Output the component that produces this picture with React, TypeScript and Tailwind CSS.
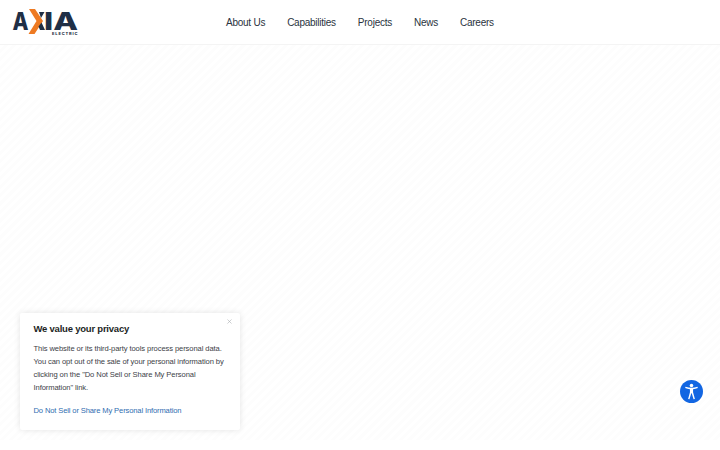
import { X } from "lucide-react";

const links = ["About Us", "Capabilities", "Projects", "News", "Careers"];

function Logo() {
  return (
    <svg width="68" height="30" viewBox="0 0 68 30" className="block">
      <text x="0.500" y="23" fontFamily="Inter, sans-serif" fontWeight="800" fontSize="25" fill="#1f2f46" textLength="16" lengthAdjust="spacingAndGlyphs">A</text>
      <path d="M17 2h6l8 12-8.500 13h-6l8-13z" fill="#ee7a22" />
      <path d="M26.500 19.500l3-4 3.500 7.500h-5zM27 5h5.500l-3.500 6z" fill="#1f2f46" />
      <text x="32" y="23" fontFamily="Inter, sans-serif" fontWeight="800" fontSize="25" fill="#1f2f46" textLength="34" lengthAdjust="spacingAndGlyphs">IA</text>
      <text x="40" y="27.800" fontFamily="Inter, sans-serif" fontWeight="800" fontSize="4" letterSpacing="0.850" fill="#1f2f46">ELECTRIC</text>
    </svg>
  );
}

function AccessIcon() {
  return (
    <svg width="17" height="17" viewBox="0 0 24 24" fill="white">
      <circle cx="12" cy="3.500" r="2.500" />
      <path d="M3 7.200l.6-1.800c2.800.9 5.500 1.300 8.400 1.300s5.600-.4 8.400-1.300l.6 1.800c-2.200.8-4.500 1.300-6.800 1.500v4.300l2.600 9.500-1.900.5-2.600-8.500h-.6l-2.600 8.500-1.900-.5 2.600-9.500V8.700C7.500 8.500 5.200 8 3 7.200z" />
    </svg>
  );
}

export default function App() {
  return (
    <div className="relative h-[450px] w-[720px] overflow-hidden bg-white font-['Liberation_Sans',sans-serif]">
      <header className="flex h-[45px] items-center border-b border-[#f4f4f4] bg-white pl-3">
        <Logo />
        <nav className="ml-[146px] flex items-center gap-[22px] text-[10px] tracking-[-0.25px] text-[#2a3340]">
          {links.map((l) => (
            <a key={l} className="pt-[1px]">{l}</a>
          ))}
        </nav>
      </header>

      <main className="h-[395px] bg-[repeating-linear-gradient(135deg,#ffffff_0px,#ffffff_3px,#fdfdfd_3px,#fdfdfd_6px)]" />

      <div className="absolute left-[20px] top-[313px] h-[117px] w-[220px] rounded-[2px] bg-white pl-[13.500px] pt-[9px] shadow-[0_0_6px_rgba(0,0,0,0.11)]">
        <X className="absolute right-[7px] top-[5px] text-[#a8acb0]" size={7} strokeWidth={2} />
        <h2 className="text-[9.500px] font-bold leading-[13px] tracking-[-0.22px] text-[#1c1f24]">We value your privacy</h2>
        <p className="mt-[7px] w-[192px] text-[7.600px] leading-[13px] tracking-[-0.1px] text-[#3c4147]">
          This website or its third-party tools process personal data. You can opt out of the sale of your personal information by clicking on the "Do Not Sell or Share My Personal Information" link.
        </p>
        <a className="mt-[10px] block text-[7.600px] leading-[13px] tracking-[-0.14px] text-[#2f6cb0]">Do Not Sell or Share My Personal Information</a>
      </div>

      <button className="absolute left-[680px] top-[380px] flex h-[23px] w-[23px] items-center justify-center rounded-full bg-[#1266e2]">
        <AccessIcon />
      </button>
    </div>
  );
}
